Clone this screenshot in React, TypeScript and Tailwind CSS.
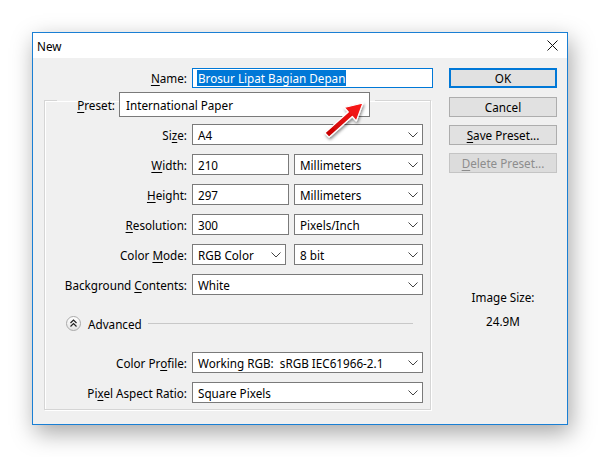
import type { ReactNode } from "react";

function U({ children }: { children: ReactNode }) {
	return <span className="underline decoration-1 underline-offset-[2px]">{children}</span>;
}

function Chevron() {
	return (
		<svg width="10" height="6" viewBox="0 0 10 6" className="shrink-0">
			<path d="M0.5 0.5 L5 5 L9.5 0.5" fill="none" stroke="#444" strokeWidth="1" />
		</svg>
	);
}

function Select({ value, className }: { value: string; className: string }) {
	return (
		<div className={`flex h-[21px] items-center justify-between border border-[#7a7a7a] bg-white pl-[5px] pr-[4px] ${className}`}>
			<span className="whitespace-pre">{value}</span>
			<Chevron />
		</div>
	);
}

function TextBox({ value, className }: { value: string; className: string }) {
	return (
		<div className={`flex h-[21px] items-center border border-[#7a7a7a] bg-white pl-[5px] ${className}`}>
			{value}
		</div>
	);
}

function Row({ label, children, className = "" }: { label: ReactNode; children: ReactNode; className?: string }) {
	return (
		<div className={`flex items-center ${className}`}>
			<div className="w-[147px] pr-[5px] text-right">{label}</div>
			{children}
		</div>
	);
}

function Button({ children, primary, disabled, className = "" }: { children: ReactNode; primary?: boolean; disabled?: boolean; className?: string }) {
	const look = primary
		? "border-2 border-[#0078d7] bg-[#e1e1e1] text-black"
		: disabled
			? "border border-[#c4c4c4] bg-[#dcdcdc] text-[#8d8d8d]"
			: "border border-[#adadad] bg-[#e1e1e1] text-black";
	return <div className={`flex h-[20px] w-[108px] items-center justify-center ${look} ${className}`}>{children}</div>;
}

export default function App() {
	return (
		<div className="relative h-[457px] w-[600px] overflow-hidden bg-white pl-[32px] pt-[32px] font-['Noto_Sans',sans-serif] text-[11.7px] leading-[16px] text-black">
			<div className="flex h-[393px] w-[536px] flex-col border border-[#1a7fd4] bg-[#f0f0f0] shadow-[3px_8px_22px_rgba(0,0,0,0.35)]">
				{/* title bar */}
				<div className="flex h-[25px] items-center justify-between bg-white pl-[4px] pr-[9px]">
					<span>New</span>
					<svg width="11" height="11" viewBox="0 0 11 11">
						<path d="M0.5 0.5 L10.5 10.5 M10.5 0.5 L0.5 10.5" stroke="#111" strokeWidth="1" />
					</svg>
				</div>

				<div className="flex flex-1">
					<div className="w-[416px]">
						<div className="mt-[10px] flex items-center">
							<div className="w-[159px] pr-[5px] text-right">
								<U>N</U>ame:
							</div>
							<div className="flex h-[20px] w-[241px] items-center border border-[#0078d7] bg-white pl-[4px]">
								<span className="bg-[#0078d7] px-[1px] text-white">Brosur Lipat Bagian Depan</span>
							</div>
						</div>

						<fieldset className="ml-[11px] mt-[4px] w-[387px] border border-[#d5d5d5] pb-[6px] shadow-[inset_1px_1px_0_#fff,1px_1px_0_#fff]">
							<legend className="ml-[12px] flex h-[16px] items-start pr-[5px]">
								<span className="flex h-[25px] w-[58px] items-center justify-end">
									<U>P</U>reset:
								</span>
								<div className="ml-[4px] flex h-[25px] w-[251px] items-center border border-[#7a7a7a] bg-white pl-[6px]">
									International Paper
								</div>
							</legend>

							<Row label={<>Si<U>z</U>e:</>} className="mt-[16px]">
								<Select value="A4" className="w-[231px]" />
							</Row>
							<Row label={<><U>W</U>idth:</>} className="mt-[9px]">
								<TextBox value="210" className="w-[97px]" />
								<Select value="Millimeters" className="ml-[5px] w-[129px]" />
							</Row>
							<Row label={<><U>H</U>eight:</>} className="mt-[9px]">
								<TextBox value="297" className="w-[97px]" />
								<Select value="Millimeters" className="ml-[5px] w-[129px]" />
							</Row>
							<Row label={<><U>R</U>esolution:</>} className="mt-[9px]">
								<TextBox value="300" className="w-[97px]" />
								<Select value="Pixels/Inch" className="ml-[5px] w-[129px]" />
							</Row>
							<Row label={<>Color <U>M</U>ode:</>} className="mt-[9px]">
								<Select value="RGB Color" className="w-[94px]" />
								<Select value="8 bit" className="ml-[8px] w-[129px]" />
							</Row>
							<Row label={<>Background <U>C</U>ontents:</>} className="mt-[9px]">
								<Select value="White" className="w-[231px]" />
							</Row>

							<div className="mt-[21px] flex h-[15px] items-center pl-[21px] pr-[17px]">
								<svg width="15" height="15" viewBox="0 0 15 15" className="shrink-0">
									<defs>
										<linearGradient id="adv" x1="0" y1="0" x2="0" y2="1">
											<stop offset="0" stopColor="#ffffff" />
											<stop offset="1" stopColor="#e4e4e4" />
										</linearGradient>
									</defs>
									<circle cx="7.5" cy="7.5" r="7" fill="url(#adv)" stroke="#a9a9a9" />
									<path d="M4.5 7 L7.5 4 L10.5 7 M4.5 10.5 L7.5 7.5 L10.5 10.5" fill="none" stroke="#222" strokeWidth="1.2" />
								</svg>
								<span className="ml-[7px]">Advanced</span>
								<div className="ml-[6px] h-[2px] flex-1 border-t border-[#c8c8c8] border-b-white" />
							</div>

							<Row label={<>Color Pr<U>o</U>file:</>} className="mt-[21px]">
								<Select value="Working RGB:  sRGB IEC61966-2.1" className="w-[231px]" />
							</Row>
							<Row label={<>Pi<U>x</U>el Aspect Ratio:</>} className="mt-[9px]">
								<Select value="Square Pixels" className="w-[231px]" />
							</Row>
						</fieldset>
					</div>

					<div className="flex w-[108px] flex-col items-center pt-[10px]">
						<Button primary>OK</Button>
						<Button className="mt-[9px]">Cancel</Button>
						<Button className="mt-[8px]">
							<span>
								<U>S</U>ave Preset...
							</span>
						</Button>
						<Button disabled className="mt-[8px]">
							<span>
								<U>D</U>elete Preset...
							</span>
						</Button>
						<div className="mt-[116px]">Image Size:</div>
						<div className="mt-[8px]">24.9M</div>
					</div>
				</div>
			</div>

			{/* annotation arrow */}
			<svg className="pointer-events-none absolute left-0 top-0" width="600" height="457" viewBox="0 0 600 457">
				<defs>
					<linearGradient id="arrowFill" x1="0" y1="1" x2="1" y2="0">
						<stop offset="0" stopColor="#c40000" />
						<stop offset="1" stopColor="#ff1a1a" />
					</linearGradient>
					<filter id="arrowShadow" x="-30%" y="-30%" width="160%" height="160%">
						<feDropShadow dx="1" dy="2" stdDeviation="1.5" floodColor="#000" floodOpacity="0.45" />
					</filter>
				</defs>
				<polygon
					points="363,103 356.3,121 352.3,116.5 329,137.2 325,132.8 348.3,112 344.3,107.5"
					fill="url(#arrowFill)"
					stroke="#fff"
					strokeWidth="1.2"
					strokeLinejoin="round"
					filter="url(#arrowShadow)"
				/>
			</svg>
		</div>
	);
}
